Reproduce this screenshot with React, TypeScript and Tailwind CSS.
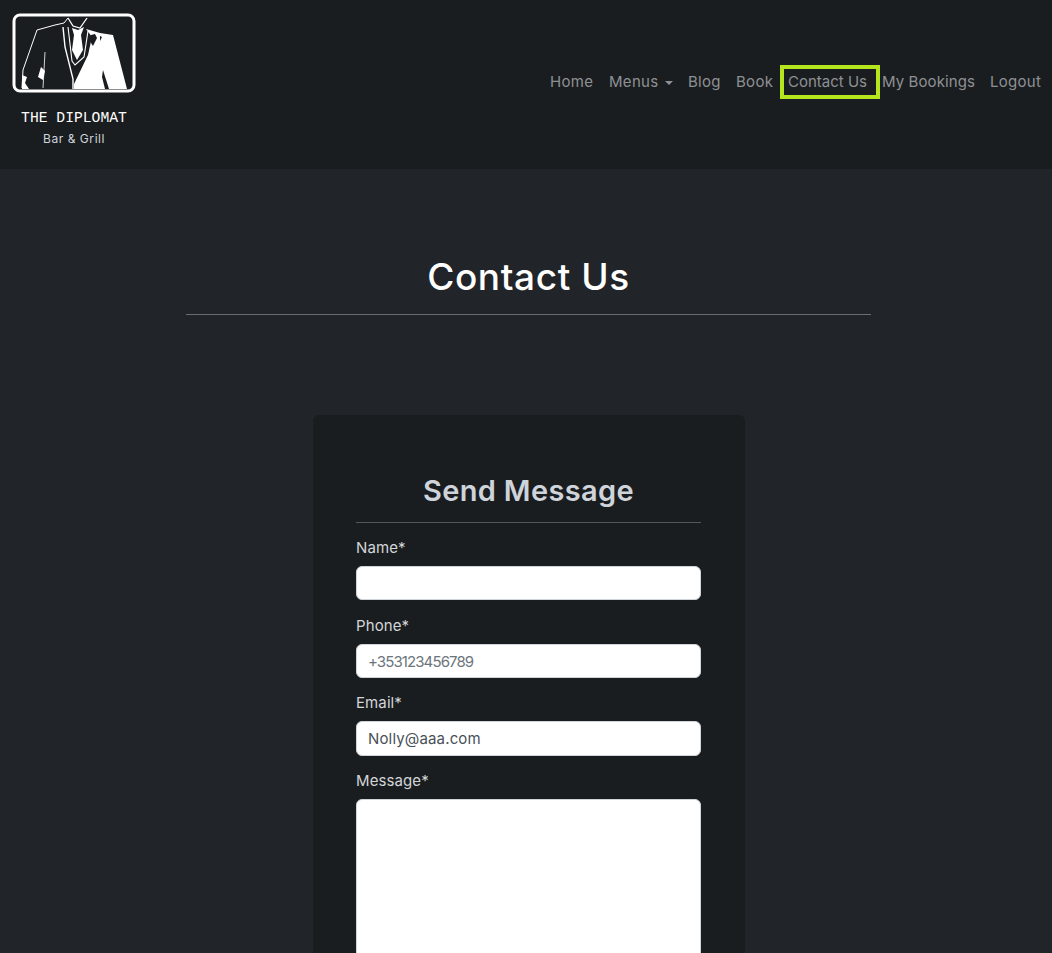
import React from "react";

const font = "font-['Inter','Noto_Sans',sans-serif]";

function SuitLogo() {
  return (
    <svg viewBox="0 0 124 80" className="h-[80px] w-[124px]">
      <rect x="2" y="2" width="120" height="76" rx="6" fill="#1a1d20" stroke="#fff" strokeWidth="3" />
      {/* right side of the jacket */}
      <path d="M74 16 L88 20 L101 22 L115 76 L62 76 L62 71 L76 42 L80 24 Z" fill="#fff" />
      <path d="M91 57 L97 76 L93 76 L90 64 Z" fill="#1a1d20" />
      <path d="M79 22 L83 21 L85 25 L81 33 L79 30 Z M88 23 L90 24 L88 28 Z" fill="#1a1d20" />
      {/* shoulders and left outline */}
      <path d="M56 5 L52 10 L43 12 L25 17 L11 57 L10 75" fill="none" stroke="#fff" strokeWidth="1" />
      <path d="M51 14 L53 34 L61 66 L61 76" fill="none" stroke="#fff" strokeWidth="1.4" />
      <path d="M33 39 L31 75" fill="none" stroke="#fff" strokeWidth="0.8" />
      <path d="M29 54 L26 64 L31 67 L33 58 Z" fill="#fff" />
      <path d="M10 62 L15 64 L13 70 L17 76 L10 76 Z" fill="#fff" />
      {/* shirt, collar and tie */}
      <path d="M56 5 L61 13 L68 15 L75 5" fill="none" stroke="#fff" strokeWidth="1.3" />
      <path d="M56 14 L60 48 L63 52 L72 44 L76 18" fill="none" stroke="#fff" strokeWidth="1.1" />
      <path d="M60 15 L66 17 L72 14 L69 22 L71 37 L65 47 L60 37 L62 22 Z" fill="#fff" />
    </svg>
  );
}

const navItems = [
  { label: "Home", width: "w-[44px]", gap: "mr-[15px]" },
  { label: "Menus", width: "w-[64px]", gap: "mr-[15px]", caret: true },
  { label: "Blog", width: "w-[33px]", gap: "mr-[15px]" },
  { label: "Book", width: "w-[37px]", gap: "mr-[7px]" },
];

function Field({ label, children, className }: { label: string; children: React.ReactNode; className?: string }) {
  return (
    <div className={className}>
      <label className="mb-[6px] block text-[15px] leading-[24px] tracking-[0.1px] text-[#d3d6d9]">{label}</label>
      {children}
    </div>
  );
}

const inputClass =
  "block h-[34px] w-full rounded-[6px] border border-[#ced4da] bg-white px-[11px] text-[15px] tracking-[0.15px] text-[#495057] placeholder:tracking-[-0.9px] placeholder:text-[#6c757d] outline-none";

export default function App() {
  return (
    <div className={`h-[953px] overflow-hidden bg-[#212529] ${font}`}>
      <header className="flex h-[169px] items-start justify-between bg-[#1a1d20] pl-[12px] pr-[11px]">
        <div className="flex flex-col items-center pt-[13px]">
          <SuitLogo />
          <div className="mt-[16px] font-['Liberation_Mono',monospace] text-[14.7px] leading-[18px] text-white">
            THE DIPLOMAT
          </div>
          <div className="mt-[3px] text-[12px] leading-[18px] tracking-[0.55px] text-[#ced4da]">Bar &amp; Grill</div>
        </div>

        <nav className="mt-[65px] flex h-[34px] items-center text-[15px] tracking-[0.3px] text-[#8e9194]">
          {navItems.map((item) => (
            <a key={item.label} className={`${item.width} ${item.gap} flex items-center whitespace-nowrap`}>
              {item.label}
              {item.caret && (
                <span className="ml-[7px] mt-[1px] h-0 w-0 border-x-[4.5px] border-t-[4.5px] border-x-transparent border-t-[#8e9194]" />
              )}
            </a>
          ))}
          <a className="mr-[2px] flex h-[34px] w-[100px] items-center whitespace-nowrap border-4 border-[#b5e61d] pl-[4px] tracking-[0px]">
            Contact Us
          </a>
          <a className="mr-[15px] w-[93px] whitespace-nowrap tracking-[0.1px]">My Bookings</a>
          <a className="w-[51px] whitespace-nowrap">Logout</a>
        </nav>
      </header>

      <main className="ml-[186px] flex w-[685px] flex-col">
        <h1 className="mt-[84px] text-center text-[37px] font-medium leading-[48px] tracking-[0.6px] text-white">Contact Us</h1>
        <hr className="mt-[13px] w-full border-t border-[#6b6e71]" />

        <section className="ml-[127px] mt-[100px] w-[432px] rounded-[6px] bg-[#1a1d20] pb-[40px] pl-[43px] pr-[44px] pt-[57px]">
          <h2 className="text-center text-[29px] font-semibold leading-[38px] tracking-[0.35px] text-[#ced4da]">Send Message</h2>
          <hr className="mb-[13px] mt-[12px] border-t border-[#55585b]" />
          <Field label="Name*">
            <input className={inputClass} />
          </Field>
          <Field label="Phone*" className="mt-[14px]">
            <input className={inputClass} placeholder="+353123456789" />
          </Field>
          <Field label="Email*" className="mt-[13px]">
            <input className={`${inputClass} h-[35px]`} defaultValue="Nolly@aaa.com" />
          </Field>
          <Field label="Message*" className="mt-[13px]">
            <textarea className="block h-[260px] w-full resize-none rounded-[6px] border border-[#ced4da] bg-white outline-none" />
          </Field>
        </section>
      </main>
    </div>
  );
}
